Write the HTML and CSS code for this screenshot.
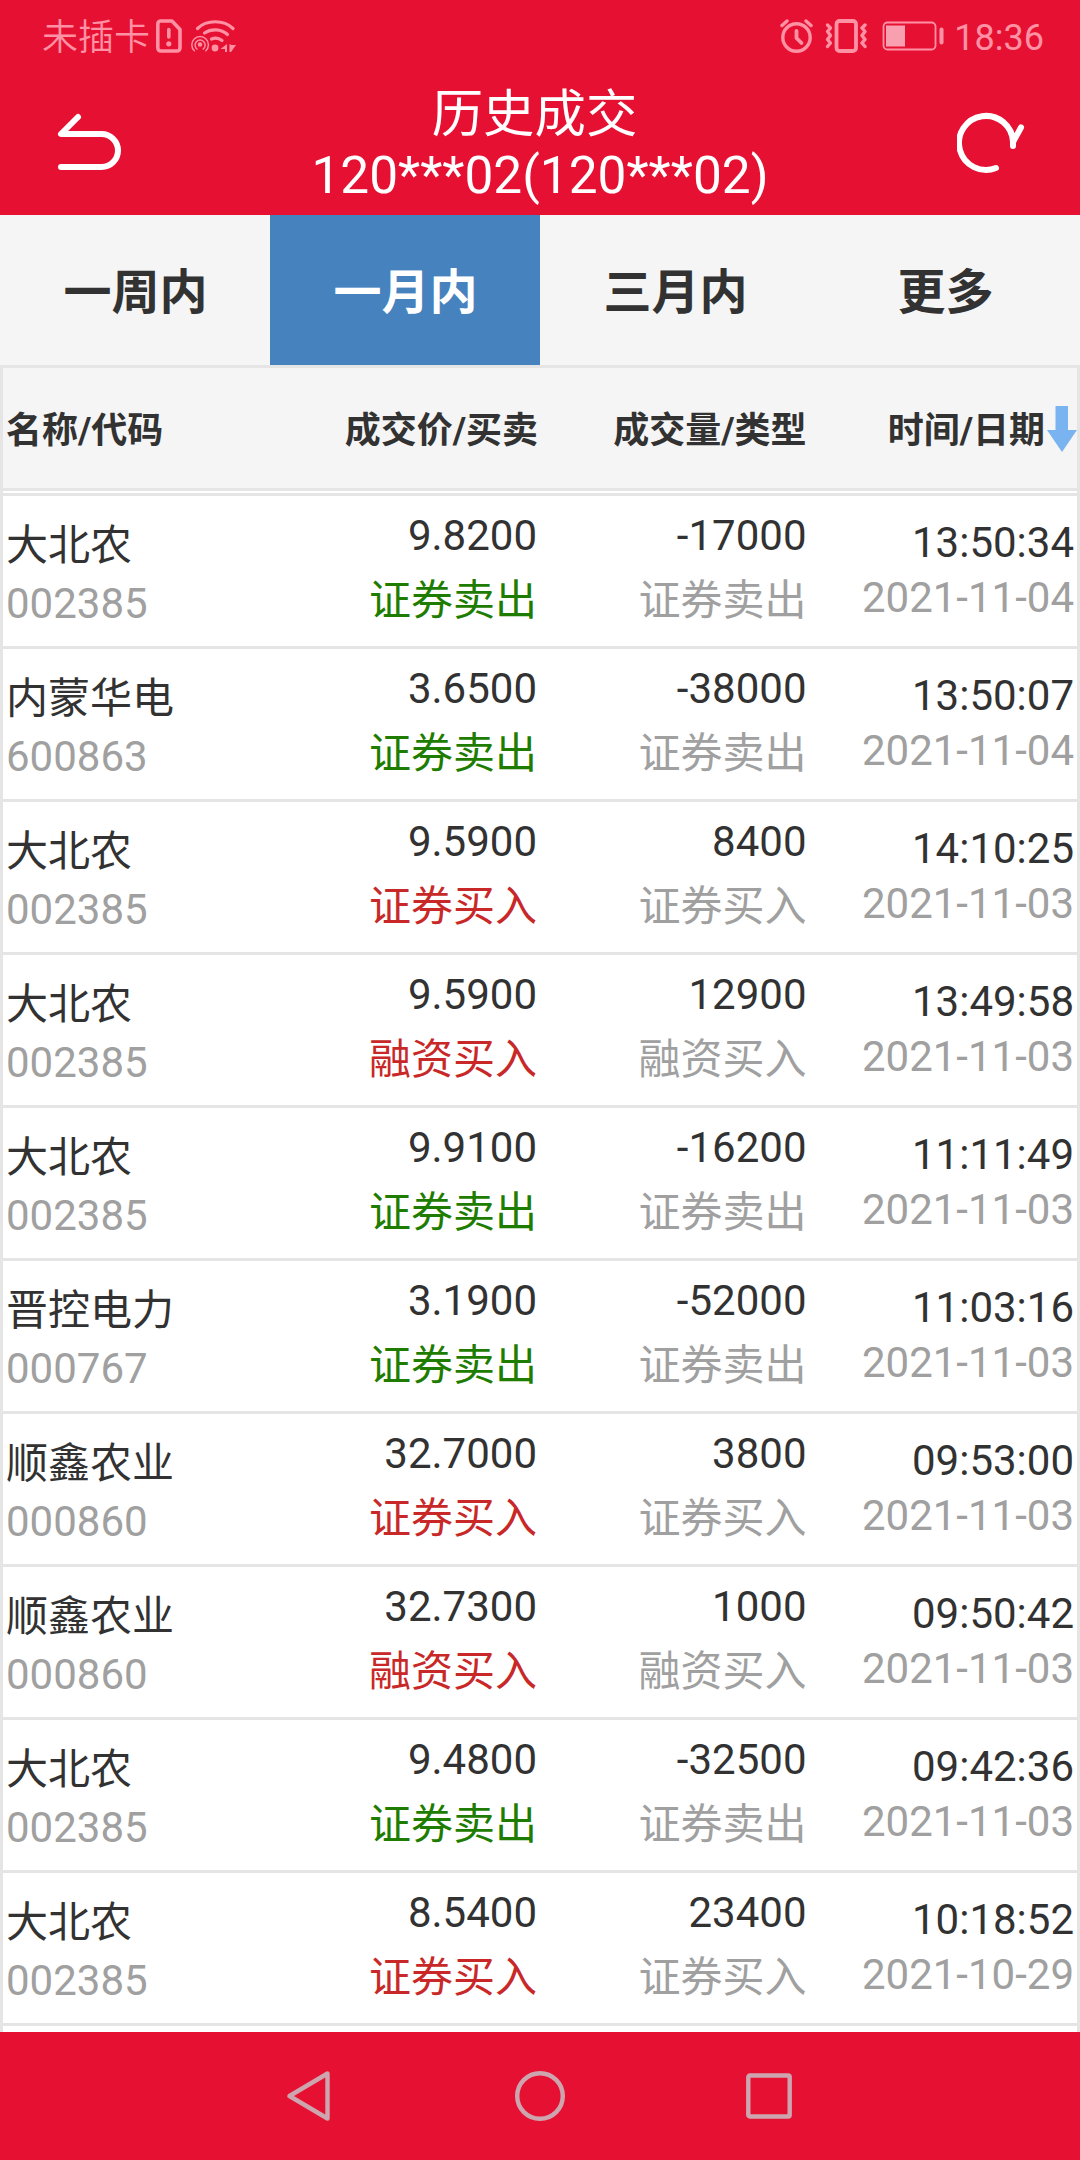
FILE: index.html
```html
<!DOCTYPE html>
<html lang="zh-CN">
<head>
  <meta charset="UTF-8">
  <meta name="viewport" content="width=device-width, initial-scale=1.0">
  <title>历史成交</title>
  <link rel="stylesheet" href="styles.css">
</head>
<body>
  <div class="status-bar">
    <span class="carrier">未插卡</span>
    <svg class="icon-sim" width="26" height="34" viewBox="0 0 26 34" fill="none" stroke="currentColor" stroke-width="3.6">
      <path d="M4.8 2H16L24 10.5V29a3 3 0 0 1-3 3H4.8a3 3 0 0 1-3-3V5a3 3 0 0 1 3-3z" stroke-linejoin="round"/>
      <path d="M12.8 10.5V18" stroke-linecap="round"/>
      <circle cx="12.8" cy="24.8" r="2.6" fill="currentColor" stroke="none"/>
    </svg>
    <svg class="icon-wifi" width="45" height="34" viewBox="0 0 45 34" fill="none" stroke="currentColor" stroke-width="3.2" stroke-linecap="round">
      <path d="M6.5 9.5C15.5 0.5 33 0.5 42 9.5"/>
      <path d="M13.5 14C20 9.5 30 9.5 36.5 15.5"/>
      <path d="M20.5 20C24 18.5 28 19 31 21.5"/>
      <circle cx="24" cy="29" r="3.4" fill="currentColor" stroke="none"/>
      <circle cx="9" cy="25.5" r="2.3" fill="currentColor" stroke="none"/>
      <path d="M6 30a5 5 0 1 1 6.2 0M3.4 31.8a8.3 8.3 0 1 1 11.4 0" stroke-width="1.5"/>
      <path d="M36 25v8h-2v-3h-4.5zM38.500 25v8h1.500l5-7H40.500z" fill="currentColor" stroke="none"/>
    </svg>
    <span class="status-spacer"></span>
    <svg class="icon-alarm" width="33" height="34" viewBox="0 0 33 34" fill="none" stroke="currentColor" stroke-width="3.4" stroke-linecap="round">
      <circle cx="16.5" cy="18.5" r="13.7"/>
      <path d="M16.5 12v7l5 5" stroke-width="3.8"/>
      <path d="M2 6.5L7 2M31 6.5L26 2"/>
    </svg>
    <svg class="icon-vibrate" width="42" height="34" viewBox="0 0 42 34" fill="none" stroke="currentColor" stroke-width="3.4" stroke-linecap="round" stroke-linejoin="round">
      <rect x="11.5" y="2" width="19.5" height="30" rx="3" stroke-width="3.8"/>
      <path d="M2.5 6L5.5 9L2.5 12.5L5.5 16.5L2.5 20.5L5.5 24L2.5 27.5"/>
      <path d="M40 6L37 9L40 12.5L37 16.5L40 20.5L37 24L40 27.5"/>
    </svg>
    <svg class="icon-battery" width="62" height="30" viewBox="0 0 62 30" fill="none" stroke="currentColor">
      <rect x="1.5" y="1.5" width="52" height="27" rx="4" stroke-width="1.8"/>
      <rect class="battery-level" x="4" y="4.5" width="19" height="21"/>
      <path d="M59.5 8.5v13" stroke-width="4" stroke-linecap="round"/>
    </svg>
    <span class="clock">18:36</span>
  </div>

  <header class="title-bar">
    <svg class="icon-back" width="66" height="60" viewBox="0 0 66 60" fill="none" stroke="currentColor" stroke-width="6" stroke-linecap="round" stroke-linejoin="round">
      <path d="M23 5L6 22H46.5a16.5 16.5 0 0 1 0 33H6"/>
    </svg>
    <h1 class="title"><span class="title-name">历史成交</span><br>120***02(120***02)</h1>
    <svg class="icon-refresh" width="70" height="64" viewBox="0 0 70 64" fill="none" stroke="currentColor" stroke-width="6" stroke-linecap="round" stroke-linejoin="round">
      <path d="M39 57A27 27 0 1 1 56 31L64 16.5M56 35V30"/>
    </svg>
  </header>

  <nav class="tabs">
    <a class="tab">一周内</a>
    <a class="tab active">一月内</a>
    <a class="tab">三月内</a>
    <a class="tab">更多</a>
  </nav>

  <main class="deals">
    <div class="deals-head">
      <span>名称/代码</span>
      <span>成交价/买卖</span>
      <span>成交量/类型</span>
      <span class="sorted">时间/日期<svg class="icon-sort" width="30" height="46" viewBox="0 0 30 46"><path d="M8.5 0H21V24H30L15 46L0 24H8.5z" fill="currentColor"/></svg></span>
    </div>

    <div class="deal">
      <div class="name">大北农<br><span class="muted">002385</span></div>
      <div class="price">9.8200<br><span class="sell">证券卖出</span></div>
      <div class="amount">-17000<br><span class="muted">证券卖出</span></div>
      <div class="time">13:50:34<br><span class="muted">2021-11-04</span></div>
    </div>
    <div class="deal">
      <div class="name">内蒙华电<br><span class="muted">600863</span></div>
      <div class="price">3.6500<br><span class="sell">证券卖出</span></div>
      <div class="amount">-38000<br><span class="muted">证券卖出</span></div>
      <div class="time">13:50:07<br><span class="muted">2021-11-04</span></div>
    </div>
    <div class="deal">
      <div class="name">大北农<br><span class="muted">002385</span></div>
      <div class="price">9.5900<br><span class="buy">证券买入</span></div>
      <div class="amount">8400<br><span class="muted">证券买入</span></div>
      <div class="time">14:10:25<br><span class="muted">2021-11-03</span></div>
    </div>
    <div class="deal">
      <div class="name">大北农<br><span class="muted">002385</span></div>
      <div class="price">9.5900<br><span class="buy">融资买入</span></div>
      <div class="amount">12900<br><span class="muted">融资买入</span></div>
      <div class="time">13:49:58<br><span class="muted">2021-11-03</span></div>
    </div>
    <div class="deal">
      <div class="name">大北农<br><span class="muted">002385</span></div>
      <div class="price">9.9100<br><span class="sell">证券卖出</span></div>
      <div class="amount">-16200<br><span class="muted">证券卖出</span></div>
      <div class="time">11:11:49<br><span class="muted">2021-11-03</span></div>
    </div>
    <div class="deal">
      <div class="name">晋控电力<br><span class="muted">000767</span></div>
      <div class="price">3.1900<br><span class="sell">证券卖出</span></div>
      <div class="amount">-52000<br><span class="muted">证券卖出</span></div>
      <div class="time">11:03:16<br><span class="muted">2021-11-03</span></div>
    </div>
    <div class="deal">
      <div class="name">顺鑫农业<br><span class="muted">000860</span></div>
      <div class="price">32.7000<br><span class="buy">证券买入</span></div>
      <div class="amount">3800<br><span class="muted">证券买入</span></div>
      <div class="time">09:53:00<br><span class="muted">2021-11-03</span></div>
    </div>
    <div class="deal">
      <div class="name">顺鑫农业<br><span class="muted">000860</span></div>
      <div class="price">32.7300<br><span class="buy">融资买入</span></div>
      <div class="amount">1000<br><span class="muted">融资买入</span></div>
      <div class="time">09:50:42<br><span class="muted">2021-11-03</span></div>
    </div>
    <div class="deal">
      <div class="name">大北农<br><span class="muted">002385</span></div>
      <div class="price">9.4800<br><span class="sell">证券卖出</span></div>
      <div class="amount">-32500<br><span class="muted">证券卖出</span></div>
      <div class="time">09:42:36<br><span class="muted">2021-11-03</span></div>
    </div>
    <div class="deal">
      <div class="name">大北农<br><span class="muted">002385</span></div>
      <div class="price">8.5400<br><span class="buy">证券买入</span></div>
      <div class="amount">23400<br><span class="muted">证券买入</span></div>
      <div class="time">10:18:52<br><span class="muted">2021-10-29</span></div>
    </div>
  </main>

  <footer class="nav-bar">
    <svg width="50" height="50" viewBox="0 0 50 50"><path d="M41.5 2.5V47.5L3.5 25z"/></svg>
    <svg width="50" height="50" viewBox="0 0 50 50"><circle cx="25" cy="25" r="22.8"/></svg>
    <svg width="50" height="50" viewBox="0 0 50 50"><rect x="4.3" y="4.5" width="41.4" height="41" rx="1.5"/></svg>
  </footer>
</body>
</html>
```
FILE: styles.css
```css
* {
  box-sizing: border-box;
}

body {
  display: flex;
  flex-direction: column;
  height: 2160px;
  margin: 0;
  overflow: hidden;
  background-color: #fff;
  color: #323232;
  font-family: Roboto, "Noto Sans CJK SC", sans-serif;
  font-size: 42px;
}

svg {
  display: block;
  flex: none;
}

/* status bar */
.status-bar {
  display: flex;
  align-items: center;
  height: 72px;
  padding: 0 36px 0 42px;
  background-color: #e61132;
  color: #ff91a5;
  font-size: 36px;
  line-height: 72px;
}

.carrier {
  width: 114px;
  padding-top: 4px;
  font-weight: 350;
}

.icon-wifi {
  margin-left: 9px;
}

.status-spacer {
  flex: 1;
}

.icon-vibrate {
  margin-left: 12px;
}

.icon-battery {
  margin-left: 15px;
}

.battery-level {
  fill: #f9a0b0;
  stroke: none;
}

.clock {
  margin-left: 10px;
  padding-top: 4px;
}

/* title bar */
.title-bar {
  display: flex;
  justify-content: space-between;
  height: 143px;
  padding: 12px 53px 0 55px;
  background-color: #e61132;
  color: #fff;
}

.title {
  margin: 0;
  padding-left: 2px;
  font-size: 51.4px;
  font-weight: 400;
  line-height: 61px;
  text-align: center;
}

.title-name {
  padding-right: 11px;
}

.icon-back {
  margin-top: 28px;
}

.icon-refresh {
  margin-top: 27px;
}

/* period tabs */
.tabs {
  display: grid;
  grid-template-columns: repeat(4, 1fr);
  height: 150px;
  background-color: #f5f5f5;
}

.tab {
  padding-left: 1px;
  font-size: 48px;
  font-weight: 700;
  line-height: 156px;
  text-align: center;
}

.tab.active {
  background-color: #4682be;
  color: #fff;
}

/* deal list */
.deals {
  flex: 1;
  overflow: hidden;
  border: solid #e5e5e5;
  border-width: 3px 3px 0;
}

.deals-head,
.deal {
  display: grid;
  grid-template-columns: repeat(4, 1fr);
  text-align: right;
}

.deals-head {
  height: 123px;
  margin-bottom: 2px;
  border-bottom: 3px solid #e5e5e5;
  background-color: #f5f5f5;
  font-size: 36px;
  font-weight: 700;
  line-height: 126px;
}

.deals-head span {
  padding: 0 2px 0 3px;
}

.deals-head span:first-child {
  text-align: left;
}

.deals-head .sorted {
  display: flex;
  justify-content: flex-end;
  padding-right: 0;
}

.icon-sort {
  margin: 38px 0 0 2px;
  color: #7ab4f0;
}

.deal {
  height: 153px;
  border-bottom: 3px solid #e5e5e5;
}

.deals-head + .deal {
  height: 156px;
  border-top: 3px solid #e5e5e5;
}

.name {
  padding: 21px 3px 0;
  line-height: 58px;
  text-align: left;
}

.price,
.amount {
  padding: 7px 3px 0;
  line-height: 65px;
}

.amount {
  padding-right: 2px;
}

.time {
  padding: 19px 3px 0;
  line-height: 55px;
}

.muted {
  color: #a0a0a0;
}

.sell {
  color: #1e7d00;
}

.buy {
  color: #c82828;
}

/* system navigation */
.nav-bar {
  display: flex;
  align-items: center;
  justify-content: center;
  gap: 179px;
  height: 128px;
  background-color: #e61132;
}

.nav-bar svg {
  fill: none;
  stroke: #cda5af;
  stroke-width: 4.4;
  stroke-linejoin: round;
}
```
